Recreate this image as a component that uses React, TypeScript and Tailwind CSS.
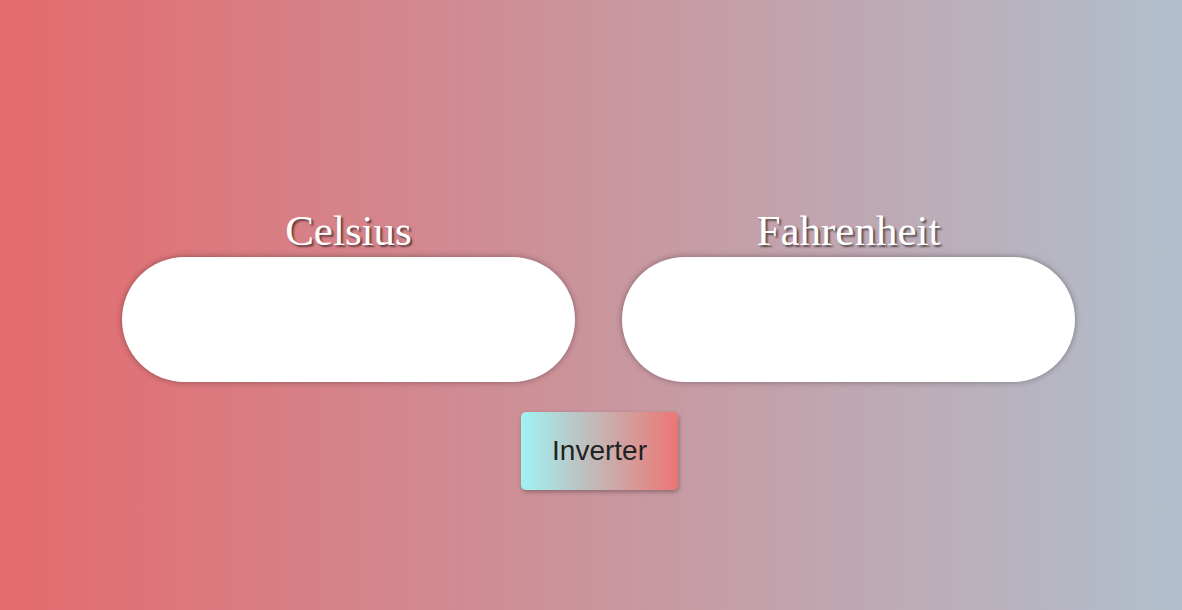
export default function App() {
  return (
    <div className="w-full h-[610px] overflow-hidden bg-[linear-gradient(to_right,#e46a6d,#b1bfcc)] flex flex-col items-center pl-[15px] pt-[209px]">
      <div className="flex gap-[47px]">
        <div className="flex flex-col items-center w-[453px]">
          <label className="text-[43px] leading-none text-white [font-family:'Liberation_Serif',serif] [text-shadow:2px_2px_2px_rgba(0,0,0,0.55)]">
            Celsius
          </label>
          <input className="mt-[5px] w-[453px] h-[125px] rounded-full bg-white outline-none shadow-[0_0_6px_rgba(0,0,0,0.35)]" />
        </div>
        <div className="flex flex-col items-center w-[453px]">
          <label className="text-[43px] leading-none text-white [font-family:'Liberation_Serif',serif] [text-shadow:2px_2px_2px_rgba(0,0,0,0.55)]">
            Fahrenheit
          </label>
          <input className="mt-[5px] w-[453px] h-[125px] rounded-full bg-white outline-none shadow-[0_0_6px_rgba(0,0,0,0.35)]" />
        </div>
      </div>
      <button className="mt-[30px] ml-[2px] w-[157px] h-[78px] rounded-[5px] bg-[linear-gradient(to_right,#9ff2f3,#ec7674)] text-[28px] text-[#222] [font-family:'Liberation_Sans',Arial,sans-serif] shadow-[1px_2px_4px_rgba(0,0,0,0.3)]">
        Inverter
      </button>
    </div>
  );
}
